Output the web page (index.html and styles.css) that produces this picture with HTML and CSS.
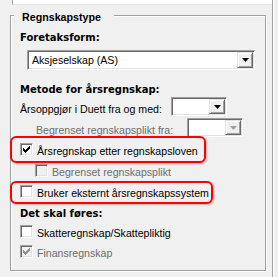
FILE: index.html
```html
<!DOCTYPE html>
<html lang="no">
<head>
<meta charset="utf-8"/>
<title>Regnskapstype</title>
<link rel="stylesheet" href="styles.css">
</head>
<body>
<div class="panel">
  <div class="topbox"></div>
  <fieldset class="group">
    <legend>Regnskapstype</legend>

    <div class="caption">Foretaksform:</div>
    <div class="combo combo-wide">
      <span class="combo-value">Aksjeselskap (AS)</span>
      <span class="combo-btn"><svg width="7" height="4" viewBox="0 0 7 4"><path d="M0 0h7L3.5 4z"/></svg></span>
    </div>

    <div class="caption caption-method">Metode for årsregnskap:</div>
    <div class="field-row row-from">
      <span class="field-label">Årsoppgjør i Duett fra og med:</span>
      <div class="combo combo-small">
        <span class="combo-value"></span>
        <span class="combo-btn"><svg width="7" height="4" viewBox="0 0 7 4"><path d="M0 0h7L3.5 4z"/></svg></span>
      </div>
    </div>
    <div class="field-row row-limited disabled">
      <span class="field-label">Begrenset regnskapsplikt fra:</span>
      <div class="combo combo-small">
        <span class="combo-value"></span>
        <span class="combo-btn"><svg width="7" height="4" viewBox="0 0 7 4"><path d="M0 0h7L3.5 4z"/></svg></span>
      </div>
    </div>

    <div class="check-row row-law marked">
      <span class="check"><svg width="7" height="7" viewBox="0 0 7 7"><path d="M0 2H1V3H2V4H3V3H4V2H5V1H6V0H7V3H6V4H5V5H4V6H3V7H2V6H1V5H0Z"/></svg></span>
      <span class="check-text">Årsregnskap etter regnskapsloven</span>
    </div>
    <div class="check-row row-limited-check disabled">
      <span class="check"></span>
      <span class="check-text">Begrenset regnskapsplikt</span>
    </div>
    <div class="check-row row-external marked marked-small">
      <span class="check"></span>
      <span class="check-text">Bruker eksternt årsregnskapssystem</span>
    </div>

    <div class="caption caption-posting">Det skal føres:</div>
    <div class="check-row row-tax">
      <span class="check"></span>
      <span class="check-text">Skatteregnskap/Skattepliktig</span>
    </div>
    <div class="check-row row-finance disabled">
      <span class="check"><svg width="7" height="7" viewBox="0 0 7 7"><path d="M0 2H1V3H2V4H3V3H4V2H5V1H6V0H7V3H6V4H5V5H4V6H3V7H2V6H1V5H0Z"/></svg></span>
      <span class="check-text">Finansregnskap</span>
    </div>
  </fieldset>
</div>
</body>
</html>
```
FILE: styles.css
```css
  body {
    margin: 0;
    background: #f0f0f0;
    font-family: "Liberation Sans", Arial, sans-serif;
    font-size: 10.6px;
    color: #000;
  }
  .panel {
    width: 272px;
    height: 277px;
    border-right: 1px solid #a0a0a0;
    box-shadow: 1px 0 0 #fff;
    overflow: hidden;
  }
  .topbox {
    margin-left: 12px;
    height: 4px;
    background: #fff;
    border-left: 1px solid #a0a0a0;
    border-bottom: 1px solid #e3e3e3;
  }

  /* group box */
  .group {
    margin: 2px 0 0 10px;
    padding: 7px 0 0 9px;
    width: 256px;
    height: 264px;
    box-sizing: border-box;
    min-width: 0;
    border: 1px solid #a0a0a0;
    box-shadow: inset 1px 1px 0 #fff, 1px 1px 0 #fff;
  }
  .group legend {
    margin-left: -6px;
    padding: 4px 13px 0 8px;
    background: #f0f0f0;
    font: bold 10.7px/13px "Liberation Sans", Arial, sans-serif;
  }
  .caption {
    font: bold 10px/13px "DejaVu Sans", sans-serif;
  }
  .caption-method { margin-top: 13px; }
  .caption-posting { margin-top: 7px; }

  /* combo boxes */
  .combo {
    display: flex;
    height: 20px;
    box-sizing: border-box;
    padding: 1px;
    background: #fff;
    border: 1px solid;
    border-color: #a0a0a0 #fff #fff #a0a0a0;
    box-shadow: inset 1px 1px 0 #696969, inset -1px -1px 0 #e3e3e3;
  }
  .combo-wide {
    width: 228px;
    margin: 6px 0 0 7px;
  }
  .combo-small {
    width: 56px;
    height: 19px;
  }
  .combo-value {
    flex: 1;
    padding-left: 3px;
    line-height: 16px;
  }
  .combo-btn {
    display: flex;
    align-items: center;
    justify-content: center;
    width: 16px;
    box-sizing: border-box;
    background: #f0f0f0;
    border: 1px solid;
    border-color: #e3e3e3 #696969 #696969 #e3e3e3;
    box-shadow: inset 1px 1px 0 #fff, inset -1px -1px 0 #a0a0a0;
  }
  .combo-btn svg { fill: #000; }
  .disabled .combo-btn svg { fill: #a0a0a0; }

  .field-row {
    display: flex;
    align-items: flex-end;
  }
  .field-label {
    width: 151px;
    flex: none;
    line-height: 13px;
  }
  .row-from { margin-top: 1px; }
  .row-limited {
    margin-top: 2px;
    padding-left: 16px;
  }
  .disabled { color: #6d6d6d; }

  /* check boxes */
  .check-row {
    display: flex;
    align-items: flex-start;
    height: 15px;
  }
  .check {
    width: 13px;
    height: 13px;
    flex: none;
    box-sizing: border-box;
    background: #fff;
    border: 1px solid;
    border-color: #a0a0a0 #fff #fff #a0a0a0;
    box-shadow: inset 1px 1px 0 #696969, inset -1px -1px 0 #e3e3e3;
  }
  .check svg {
    display: block;
    margin: 2px;
    fill: #000;
    shape-rendering: crispEdges;
  }
  .disabled .check { background: #f0f0f0; }
  .disabled .check svg { fill: #8d8d8d; }
  .check-text {
    margin-left: 4px;
    padding-top: 2px;
    line-height: 13px;
    white-space: nowrap;
  }
  .row-law { margin-top: 6px; }
  .row-limited-check { margin-top: 6px; padding-left: 15px; }
  .row-external { margin-top: 6px; }
  .row-tax { margin-top: 5px; }
  .row-finance { margin-top: 5px; }

  /* red annotation frames */
  .marked { position: relative; }
  .marked::before {
    content: "";
    position: absolute;
    left: -10px;
    top: -7px;
    width: 196px;
    height: 27px;
    box-sizing: border-box;
    border: 2px solid #f00;
    border-radius: 6px;
    box-shadow: 1px 1px 2px rgba(0, 0, 0, 0.25);
  }
  .marked-small::before {
    top: -4px;
    width: 203px;
    height: 23px;
  }
```
